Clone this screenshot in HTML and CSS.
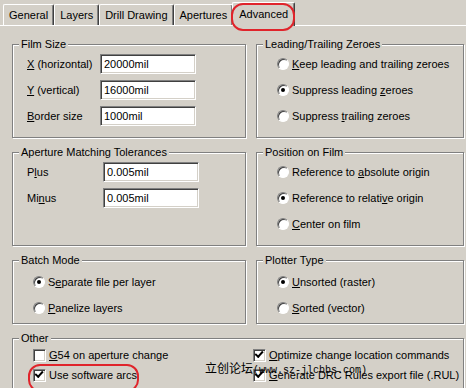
FILE: index.html
```html
<!DOCTYPE html>
<html lang="en">
<head>
    <meta charset="UTF-8">
    <meta name="viewport" content="width=device-width, initial-scale=1.0">
    <title>Gerber Setup - Advanced</title>
    <link rel="stylesheet" href="styles.css">
</head>
<body>
    <div class="dialog">
        <div class="tabs">
            <div class="tab">General</div>
            <div class="tab">Layers</div>
            <div class="tab">Drill Drawing</div>
            <div class="tab">Apertures</div>
            <div class="tab active">Advanced</div>
        </div>

        <div class="page">
            <div class="groups">
                <fieldset class="group">
                    <legend>Film Size</legend>
                    <div class="field-row film">
                        <label><u>X</u> (horizontal)</label>
                        <input class="edit" type="text" value="20000mil">
                    </div>
                    <div class="field-row film">
                        <label><u>Y</u> (vertical)</label>
                        <input class="edit" type="text" value="16000mil">
                    </div>
                    <div class="field-row film">
                        <label><u>B</u>order size</label>
                        <input class="edit" type="text" value="1000mil">
                    </div>
                </fieldset>

                <fieldset class="group">
                    <legend>Leading/Trailing Zeroes</legend>
                    <div class="option"><span class="radio"></span><span><u>K</u>eep leading and trailing zeroes</span></div>
                    <div class="option"><span class="radio checked"></span><span>Suppress leading <u>z</u>eroes</span></div>
                    <div class="option"><span class="radio"></span><span>Suppress <u>t</u>railing zeroes</span></div>
                </fieldset>

                <fieldset class="group">
                    <legend>Aperture Matching Tolerances</legend>
                    <div class="field-row tol">
                        <label>P<u>l</u>us</label>
                        <input class="edit" type="text" value="0.005mil">
                    </div>
                    <div class="field-row tol">
                        <label>Mi<u>n</u>us</label>
                        <input class="edit" type="text" value="0.005mil">
                    </div>
                </fieldset>

                <fieldset class="group">
                    <legend>Position on Film</legend>
                    <div class="option"><span class="radio"></span><span>Reference to <u>a</u>bsolute origin</span></div>
                    <div class="option"><span class="radio checked"></span><span>Reference to relati<u>v</u>e origin</span></div>
                    <div class="option"><span class="radio"></span><span><u>C</u>enter on film</span></div>
                </fieldset>

                <fieldset class="group short">
                    <legend>Batch Mode</legend>
                    <div class="option"><span class="radio checked"></span><span>S<u>e</u>parate file per layer</span></div>
                    <div class="option"><span class="radio"></span><span><u>P</u>anelize layers</span></div>
                </fieldset>

                <fieldset class="group short">
                    <legend>Plotter Type</legend>
                    <div class="option"><span class="radio checked"></span><span><u>U</u>nsorted (raster)</span></div>
                    <div class="option"><span class="radio"></span><span><u>S</u>orted (vector)</span></div>
                </fieldset>
            </div>

            <fieldset class="group other">
                <legend>Other</legend>
                <div class="other-grid">
                    <div class="option check"><span class="checkbox"></span><span><u>G</u>54 on aperture change</span></div>
                    <div class="option check"><span class="checkbox checked"></span><span><u>O</u>ptimize change location commands</span></div>
                    <div class="option check"><span class="checkbox checked"></span><span>Use software arcs</span></div>
                    <div class="option check"><span class="checkbox checked"></span><span><u>G</u>enerate DRC Rules export file (.RUL)</span></div>
                </div>
            </fieldset>
        </div>

        <!-- annotations drawn over the screenshot -->
        <div class="mark mark-tab"></div>
        <div class="mark mark-arcs"></div>
        <div class="watermark"><span class="cn">立创论坛</span><span class="url">(www.sz-jlcbbs.com)</span></div>
    </div>
</body>
</html>
```

FILE: styles.css
```css
body {
    margin: 0;
    background-color: #d4d0c8;
    font-family: "Liberation Sans", Arial, sans-serif;
    font-size: 11px;
    color: #000;
    overflow: hidden;
}
.dialog {
    position: relative;
    width: 466px;
    height: 388px;
}

/* tab strip */
.tabs {
    display: flex;
    align-items: flex-end;
    height: 25px;
    padding-left: 3px;
}
.tab {
    height: 20px;
    line-height: 20px;
    padding: 0 5px;
    border-top: 1px solid #fff;
    border-left: 1px solid #fff;
    border-right: 1px solid #404040;
    box-shadow: inset -1px 0 0 #808080;
    border-radius: 2px 2px 0 0;
}
.tab.active {
    position: relative;
    z-index: 1;
    height: 23px;
    line-height: 22px;
    margin: 0 -1px -1px -1px;
    padding: 0 6px;
    background-color: #d4d0c8;
}
.page {
    border-top: 1px solid #fff;
    padding: 12px 0 0 12px;
}

/* group boxes */
.groups {
    display: grid;
    grid-template-columns: 234px 208px;
    grid-template-rows: 100px 100px 70px;
    column-gap: 10px;
    row-gap: 8px;
}
.group {
    margin: 0;
    padding: 0;
    min-width: 0;
    box-sizing: border-box;
    border: 1px solid #808080;
    box-shadow: inset 1px 1px 0 #fff, 1px 1px 0 #fff;
}
.group legend {
    margin-left: 6px;
    padding: 0 2px;
    line-height: 13px;
    background-color: #d4d0c8;
}
.group.short {
    padding-top: 2px;
}
.group.other {
    width: 452px;
    height: 70px;
    margin-top: 8px;
}

/* label + edit rows */
.field-row {
    display: flex;
    align-items: center;
    height: 26px;
    padding-left: 14px;
}
.field-row label {
    width: 73px;
}
.field-row.tol label {
    width: 76px;
}
.edit {
    box-sizing: border-box;
    width: 96px;
    height: 20px;
    margin: 0;
    padding: 0 3px;
    font-family: "Liberation Sans", Arial, sans-serif;
    font-size: 11px;
    color: #000;
    background-color: #fff;
    border: 1px solid;
    border-color: #808080 #fff #fff #808080;
    box-shadow: inset 1px 1px 0 #404040, inset -1px -1px 0 #d4d0c8;
    outline: none;
}

/* radio buttons and check boxes */
.option {
    display: flex;
    align-items: center;
    height: 26px;
    padding-left: 20px;
    white-space: nowrap;
}
.radio {
    position: relative;
    flex: none;
    box-sizing: border-box;
    width: 12px;
    height: 12px;
    margin-right: 3px;
    border-radius: 50%;
    background-color: #fff;
    border: 1px solid;
    border-color: #808080 #fff #fff #808080;
    box-shadow: inset 1px 1px 0 #404040;
}
.radio.checked::after {
    content: "";
    position: absolute;
    left: 3px;
    top: 3px;
    width: 4px;
    height: 4px;
    border-radius: 50%;
    background-color: #000;
}
.other-grid {
    display: grid;
    grid-template-columns: 240px 1fr;
}
.option.check {
    height: 20px;
}
.other-grid .option:nth-child(even) {
    padding-left: 0;
}
.checkbox {
    position: relative;
    flex: none;
    box-sizing: border-box;
    width: 13px;
    height: 13px;
    margin-right: 3px;
    background-color: #fff;
    border: 1px solid;
    border-color: #808080 #fff #fff #808080;
    box-shadow: inset 1px 1px 0 #404040, inset -1px -1px 0 #d4d0c8;
}
.checkbox.checked::after {
    content: "";
    position: absolute;
    left: 2px;
    top: 1px;
    width: 6px;
    height: 3px;
    border-left: 2px solid #000;
    border-bottom: 2px solid #000;
    transform: translate(0, 1px) rotate(-48deg);
    transform-origin: 30% 60%;
}

/* red annotation rings and watermark */
.mark {
    position: absolute;
    border: 2px solid #e0242b;
    z-index: 2;
}
.mark-tab {
    left: 231px;
    top: 3px;
    width: 60px;
    height: 24px;
    border-radius: 12px;
}
.mark-arcs {
    left: 28px;
    top: 364px;
    width: 107px;
    height: 24px;
    border-radius: 12px;
}
.watermark {
    position: absolute;
    left: 205px;
    top: 360px;
    z-index: 3;
    white-space: nowrap;
    line-height: 16px;
}
.watermark .cn {
    font-family: "Noto Sans CJK SC", sans-serif;
    font-size: 12px;
}
.watermark .url {
    font-family: "Liberation Mono", monospace;
    font-size: 10px;
}
```
